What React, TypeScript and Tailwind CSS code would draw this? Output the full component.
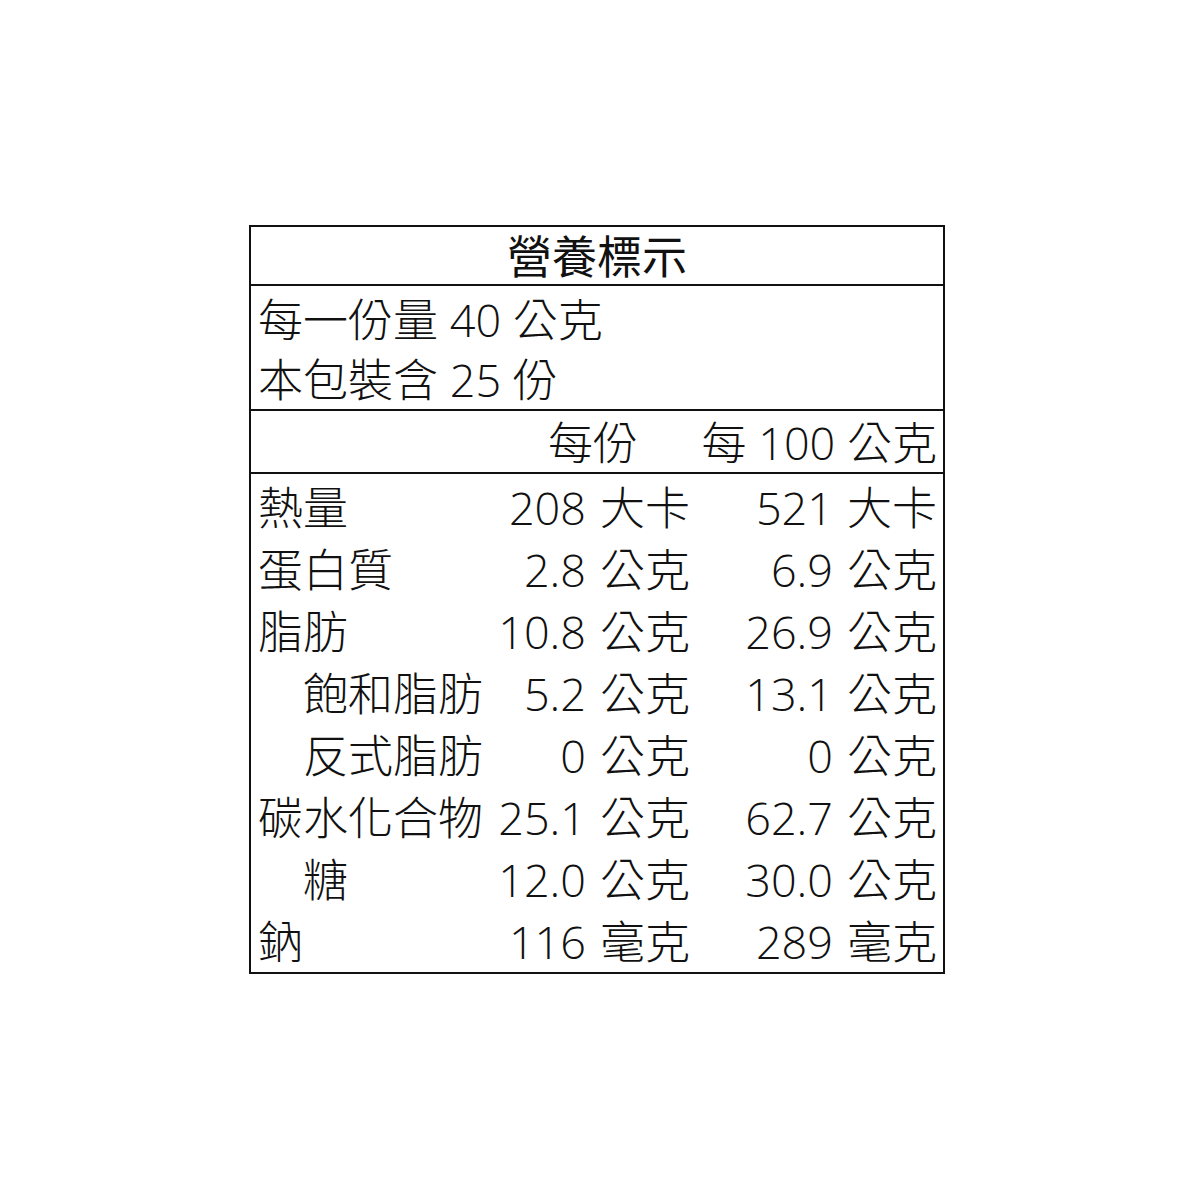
import React from "react";

const rows: { name: string; indent?: boolean; v1: string; u1: string; v2: string; u2: string }[] = [
  { name: "熱量", v1: "208", u1: "大卡", v2: "521", u2: "大卡" },
  { name: "蛋白質", v1: "2.8", u1: "公克", v2: "6.9", u2: "公克" },
  { name: "脂肪", v1: "10.8", u1: "公克", v2: "26.9", u2: "公克" },
  { name: "飽和脂肪", indent: true, v1: "5.2", u1: "公克", v2: "13.1", u2: "公克" },
  { name: "反式脂肪", indent: true, v1: "0", u1: "公克", v2: "0", u2: "公克" },
  { name: "碳水化合物", v1: "25.1", u1: "公克", v2: "62.7", u2: "公克" },
  { name: "糖", indent: true, v1: "12.0", u1: "公克", v2: "30.0", u2: "公克" },
  { name: "鈉", v1: "116", u1: "毫克", v2: "289", u2: "毫克" },
];

export default function App() {
  return (
    <div
      className="w-[1200px] h-[1200px] bg-white pt-[225px] pl-[249px] text-[#111] font-light"
      style={{ fontFamily: '"Open Sans", "Noto Sans CJK TC", sans-serif' }}
    >
      <div className="w-[696px] border-2 border-[#111] flex flex-col text-[45px] leading-none">
        <div className="h-[59px] flex items-center justify-center border-b-2 border-[#111] font-normal pt-[2px]">
          營養標示
        </div>
        <div className="h-[125px] border-b-2 border-[#111] flex flex-col justify-center pl-[7px] pt-[3px]">
          <div className="h-[60px] flex items-center whitespace-pre">每一份量 40 公克</div>
          <div className="h-[60px] flex items-center whitespace-pre">本包裝含 25 份</div>
        </div>
        <div className="h-[63px] border-b-2 border-[#111] grid grid-cols-[240px_205px_1fr] pt-[2px]">
          <div />
          <div className="flex items-center justify-end pr-[58px]">每份</div>
          <div className="flex items-center justify-end pr-[6px] whitespace-pre">每 100 公克</div>
        </div>
        <div className="h-[498px] flex flex-col pt-[3px]">
          {rows.map((r) => (
            <div key={r.name} className="flex-1 grid grid-cols-[240px_205px_1fr] items-center">
              <div className={r.indent ? "pl-[52px]" : "pl-[7px]"}>{r.name}</div>
              <div className="flex items-center justify-end pr-[6px] gap-[14px]">
                <span>{r.v1}</span>
                <span>{r.u1}</span>
              </div>
              <div className="flex items-center justify-end pr-[6px] gap-[14px]">
                <span>{r.v2}</span>
                <span>{r.u2}</span>
              </div>
            </div>
          ))}
        </div>
      </div>
    </div>
  );
}
